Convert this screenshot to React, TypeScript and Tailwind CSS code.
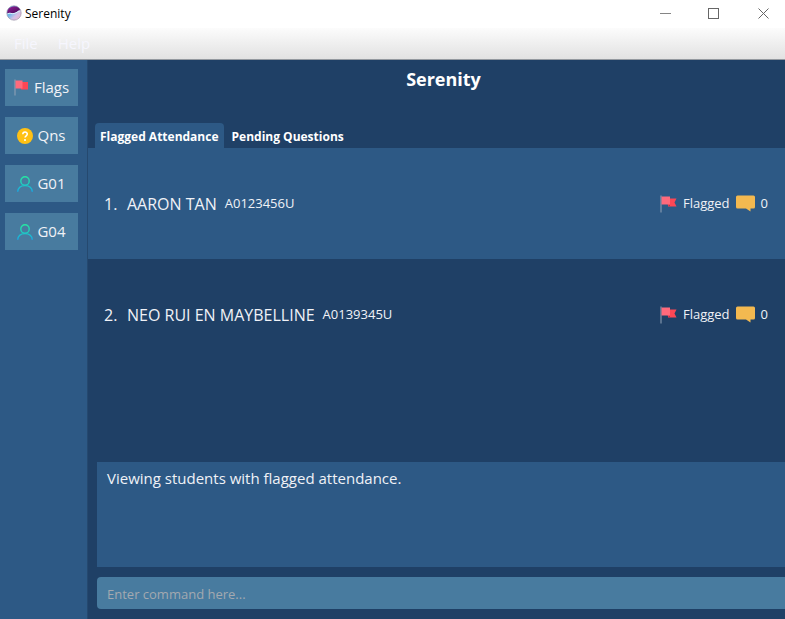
import { useState } from "react";

type Student = { index: number; name: string; matric: string; questions: number };

const students: Student[] = [
  { index: 1, name: "AARON TAN", matric: "A0123456U", questions: 0 },
  { index: 2, name: "NEO RUI EN MAYBELLINE", matric: "A0139345U", questions: 0 },
];

function LogoIcon() {
  return (
    <svg viewBox="0 0 16 16" className="size-4" aria-hidden="true">
      <defs>
        <linearGradient id="logo-top" x1="0" y1="0" x2="1" y2="1">
          <stop offset="0" stopColor="#9a1f9c" />
          <stop offset="1" stopColor="#3d0a52" />
        </linearGradient>
        <linearGradient id="logo-base" x1="0" y1="0" x2="1" y2="1">
          <stop offset="0" stopColor="#4fb4e6" />
          <stop offset="0.4" stopColor="#6fb8ea" />
          <stop offset="0.65" stopColor="#d3bfe6" />
          <stop offset="1" stopColor="#f6b0c8" />
        </linearGradient>
      </defs>
      <circle cx="8" cy="8" r="7.2" fill="url(#logo-base)" />
      <path d="M1 8.4A7.2 7.2 0 0 1 14.6 5.2C11.5 5 11 7.400 8 8C5.600 8.400 4 6.800 1 8.400Z" fill="url(#logo-top)" />
      <path d="M1.100 9C4 7.400 5.600 9.200 8.200 8.500C11 7.900 12 5.700 14.800 5.900" fill="none" stroke="#e2f3fb" strokeWidth="0.9" />
      <circle cx="8" cy="8" r="7.200" fill="none" stroke="#8d88a0" strokeWidth="0.6" />
    </svg>
  );
}

function FlagIcon({ className }: { className: string }) {
  return (
    <svg viewBox="0 0 17 18" className={className} aria-hidden="true">
      <rect x="0.500" y="0.500" width="1" height="17" fill="#93a3b8" />
      <path d="M8 3.500H16.500L14.500 7.500L16.500 11.500H8Z" fill="#fc4755" />
      <path d="M7 9.500H10V11.500Z" fill="#c92f45" />
      <path d="M1.500 1.500H10V9.500H1.500Z" fill="#ff6a7c" />
    </svg>
  );
}

function SideFlagIcon() {
  return (
    <svg viewBox="0 0 14 17" className="h-[17px] w-3.5 shrink-0" aria-hidden="true">
      <rect x="0.500" y="0.500" width="1" height="16" fill="#93a3b8" />
      <rect x="7" y="3" width="7" height="7.500" fill="#fc4755" />
      <rect x="1.500" y="1.500" width="7" height="8" fill="#ff6a7c" />
    </svg>
  );
}

function QuestionIcon() {
  return (
    <svg viewBox="0 0 16 16" className="size-4 shrink-0" aria-hidden="true">
      <circle cx="8" cy="8" r="8" fill="#ffc114" />
      <path d="M5.800 6.300C5.800 3.300 10.300 3.400 10.300 6.100C10.300 7.800 8 7.800 8 9.600" fill="none" stroke="#fff" strokeWidth="1.500" />
      <circle cx="8" cy="11.900" r="1" fill="#fff" />
    </svg>
  );
}

function PersonIcon() {
  return (
    <svg viewBox="0 0 16 16" className="size-4 shrink-0" fill="none" strokeWidth="1.400" aria-hidden="true">
      <defs>
        <linearGradient id="person" x1="0" y1="0" x2="0" y2="16" gradientUnits="userSpaceOnUse">
          <stop offset="0" stopColor="#26e8a0" />
          <stop offset="0.500" stopColor="#1fcfc0" />
          <stop offset="1" stopColor="#16a6e6" />
        </linearGradient>
      </defs>
      <circle cx="8" cy="5" r="4.200" stroke="url(#person)" />
      <path d="M0.700 15.800C1 11.800 4 9.600 8 9.600S15 11.800 15.300 15.800" stroke="url(#person)" />
    </svg>
  );
}

function CommentIcon() {
  return (
    <svg viewBox="0 0 19 17" className="h-[17px] w-[19px]" aria-hidden="true">
      <path d="M1.500 0.500H17.500Q19 0.500 19 2V12Q19 13.500 17.500 13.500H14.500V16.500L10 13.500H1.500Q0 13.500 0 12V2Q0 0.500 1.500 0.500Z" fill="#f3b950" />
    </svg>
  );
}

const sideItems = [
  { label: "Flags", icon: <SideFlagIcon />, gap: "gap-1.5" },
  { label: "Qns", icon: <QuestionIcon />, gap: "gap-1" },
  { label: "G01", icon: <PersonIcon />, gap: "gap-1" },
  { label: "G04", icon: <PersonIcon />, gap: "gap-1" },
];

export default function App() {
  const [tab, setTab] = useState("Flagged Attendance");
  const [command, setCommand] = useState("");

  return (
    <div className="flex min-h-screen flex-col bg-[#1f4066] font-['Open_Sans','Noto_Sans',sans-serif] text-[#f0f2f7]">
      <header className="flex h-7 items-center bg-white pb-0.5 pl-1.5 text-black">
        <LogoIcon />
        <span className="ml-[3px] pt-0.5 text-xs">Serenity</span>
        <div className="ml-auto flex pr-3 text-[#666]">
          <button aria-label="Minimize" className="flex w-5 justify-center">
            <svg viewBox="0 0 11 11" className="size-[11px]" stroke="currentColor"><path d="M0 5.500H11" strokeWidth="0.800" /></svg>
          </button>
          <button aria-label="Maximize" className="ml-7 flex w-5 justify-center">
            <svg viewBox="0 0 11 11" className="size-[11px]" fill="none" stroke="currentColor"><rect x="0.500" y="0.500" width="10" height="10" /></svg>
          </button>
          <button aria-label="Close" className="ml-[30px] flex w-5 justify-center">
            <svg viewBox="0 0 11 11" className="size-[11px]" stroke="currentColor"><path d="M0.500 0.500L10.500 10.500M10.500 0.500L0.500 10.500" /></svg>
          </button>
        </div>
      </header>

      <nav className="flex h-8 items-center gap-5 border-b border-[#94999f] bg-linear-to-b from-[#fcfcfc] to-[#e2e2e2] px-3.5 text-[15px] text-[#f6f6fe]">
        <button>File</button>
        <button>Help</button>
      </nav>

      <div className="flex grow">
        <aside className="flex w-[87px] shrink-0 flex-col gap-[11px] bg-[#2d5985] px-[5px] pt-[9px]">
          {sideItems.map((item) => (
            <button key={item.label} className={`flex h-[37px] w-[73px] items-center justify-center bg-[#487b9f] text-[15px] ${item.gap}`}>
              {item.icon}
              {item.label}
            </button>
          ))}
        </aside>

        <main className="flex min-w-0 grow flex-col border-l border-[#25496f]">
          <h1 className="mt-[5px] pl-3.5 text-center text-lg leading-7 font-bold text-white">Serenity</h1>

          <div role="tablist" className="mt-[30px] flex px-[7px] text-xs font-bold text-white">
            {["Flagged Attendance", "Pending Questions"].map((name) => (
              <button
                key={name}
                role="tab"
                aria-selected={tab === name}
                onClick={() => setTab(name)}
                className={`h-[25px] rounded-t px-[5px] pt-0.5 whitespace-nowrap not-first:ml-[3px] ${tab === name ? "bg-[#2d5985]" : ""}`}
              >
                {name}
              </button>
            ))}
          </div>

          <ol className="grow">
            {students.map((s) => (
              <li key={s.index} className="flex h-[111px] items-center bg-[#1f4066] pr-[17px] pl-4 odd:bg-[#2d5985]">
                <span className="w-[23px] text-base">{s.index}.</span>
                <span className="text-base">{s.name}</span>
                <span className="ml-2 text-[13px]">{s.matric}</span>
                <div className="ml-auto flex items-center text-[13px]">
                  <FlagIcon className="h-[18px] w-[17px]" />
                  <span className="ml-1.5">Flagged</span>
                  <span className="mx-1.5"><CommentIcon /></span>
                  <span>{s.questions}</span>
                </div>
              </li>
            ))}
          </ol>

          <div className="flex flex-col gap-2.5 pb-2.5 pl-[9px]">
            <output className="block h-[105px] bg-[#2d5985] px-2.5 pt-1 text-[15px] leading-6">
              Viewing students with flagged attendance.
            </output>
            <input
              aria-label="Command"
              placeholder="Enter command here..."
              value={command}
              onChange={(e) => setCommand(e.target.value)}
              className="h-8 w-full rounded-l bg-[#487b9f] px-2.5 pt-0.5 text-[13px] text-white outline-none placeholder:text-[#a3a9b0]"
            />
          </div>
        </main>
      </div>
    </div>
  );
}
